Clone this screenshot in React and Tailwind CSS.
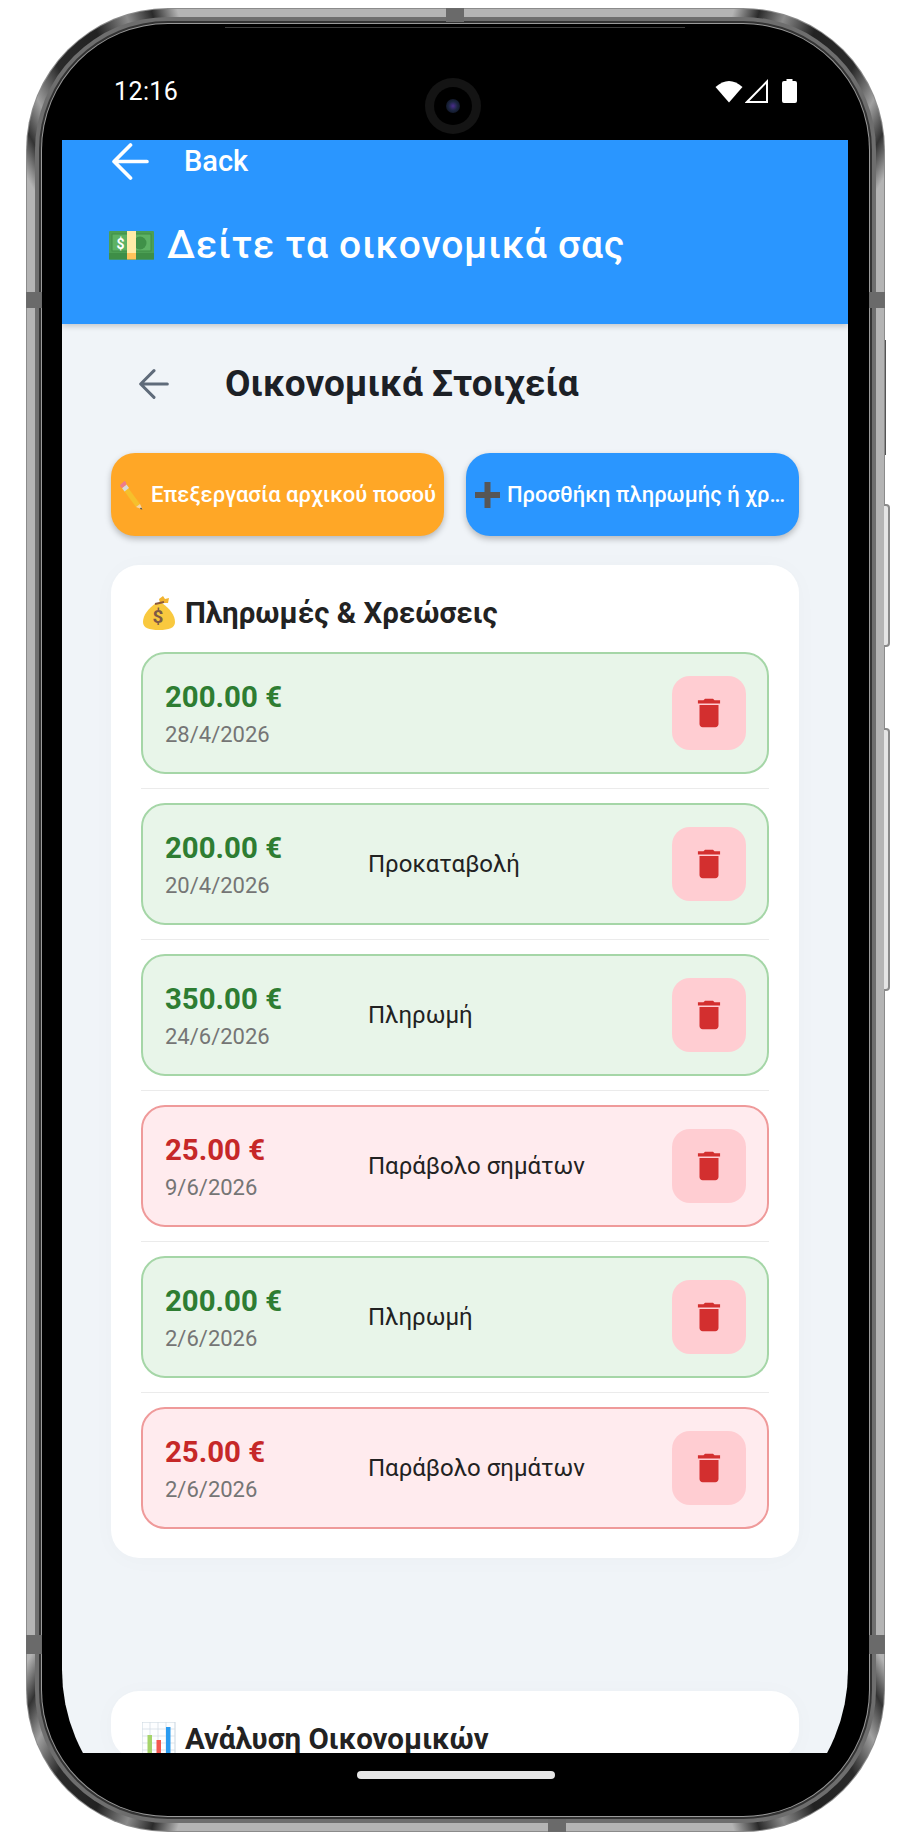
const items = [
  { kind: "g", amount: "200.00 €", date: "28/4/2026", desc: "" },
  { kind: "g", amount: "200.00 €", date: "20/4/2026", desc: "Προκαταβολή" },
  { kind: "g", amount: "350.00 €", date: "24/6/2026", desc: "Πληρωμή" },
  { kind: "r", amount: "25.00 €", date: "9/6/2026", desc: "Παράβολο σημάτων" },
  { kind: "g", amount: "200.00 €", date: "2/6/2026", desc: "Πληρωμή" },
  { kind: "r", amount: "25.00 €", date: "2/6/2026", desc: "Παράβολο σημάτων" },
];

function Arrow({ className, w = 36, h = 36 }) {
  return (
    <svg width={w} height={h} viewBox="0 0 36 36" fill="none" stroke="currentColor" strokeWidth="3.6" strokeLinecap="round" strokeLinejoin="round" className={className}>
      <path d="M18 2 L2 18 L18 34 M3 18 H34" />
    </svg>
  );
}

function Trash() {
  return (
    <svg width="38" height="38" viewBox="0 0 24 24" fill="#D32F2F">
      <path d="M6 19c0 1.1.9 2 2 2h8c1.1 0 2-.9 2-2V7H6v12zM19 4h-3.5l-1-1h-5l-1 1H5v2h14V4z" />
    </svg>
  );
}

function Banknote() {
  return (
    <svg width="45" height="29" viewBox="0 0 45 29" className="shrink-0">
      <rect x="0" y="0" width="45" height="28.5" rx="1" fill="#4C9F54" />
      <rect x="0" y="22" width="45" height="6.5" fill="#3E8E47" />
      <rect x="3" y="3" width="39" height="17" fill="#5DB264" stroke="#3E8E47" strokeWidth="1" />
      <circle cx="31" cy="12" r="6.5" fill="#3F9148" />
      <rect x="18" y="0" width="9" height="22" fill="#FFEBA8" />
      <rect x="18" y="22" width="9" height="6.5" fill="#FFC35A" />
      <text x="11.5" y="18" fontSize="14" fontWeight="700" fill="#fff" textAnchor="middle" fontFamily="Roboto, sans-serif">$</text>
    </svg>
  );
}

function Pencil() {
  return (
    <svg width="26" height="30" viewBox="0 0 26 30" className="shrink-0">
      <path d="M5 6 L19 25 L15 28 L1 9 Z" transform="translate(2 -1)" fill="#F6C02C" />
      <path d="M3 8 L7.5 4.5 L10 8 L5.5 11.5 Z" fill="#D9D9D9" />
      <path d="M1 5 L5.5 1 Q7 1 7.5 4.5 L3 8 Q1 7 1 5 Z" fill="#EF7C8A" />
      <path d="M17 27 L21 24 L23.5 29.5 Z" fill="#F4D6A8" />
      <path d="M22 27.5 L23.5 29.5 L21 29 Z" fill="#333" />
    </svg>
  );
}

function Plus() {
  return (
    <svg width="25" height="34" viewBox="0 0 25 34" className="shrink-0">
      <path d="M9.5 4 H15.5 V14 H25 V20 H15.5 V30 H9.5 V20 H0 V14 H9.5 Z" fill="#565656" />
    </svg>
  );
}

function Bag() {
  return (
    <svg width="34" height="34" viewBox="0 0 34 34" className="shrink-0">
      <path d="M14 7 L20 7 C28 13 33 19 33 26 C33 32 27 34 17 34 C7 34 1 32 1 26 C1 19 6 13 14 7 Z" fill="#F9C93F" />
      <path d="M18 7 L17 3 L21 0 L23 3 L27 2 L26 7 Z" fill="#F2B430" />
      <path d="M13 8 L22 6" stroke="#8C5A3C" strokeWidth="2" />
      <text x="16" y="27" fontSize="19" fontWeight="700" fill="#7D5A46" textAnchor="middle" fontFamily="Roboto, sans-serif">$</text>
    </svg>
  );
}

function Chart() {
  return (
    <svg width="34" height="34" viewBox="0 0 34 34" className="shrink-0">
      <rect x="0" y="0" width="33" height="34" fill="#FDFEFF" stroke="#C9D6E0" strokeWidth="1" />
      <path d="M0 7H33M0 14H33M0 21H33M0 28H33M8 0V34M16 0V34M24 0V34" stroke="#D4DEE6" strokeWidth="0.8" />
      <rect x="5.5" y="13" width="4.5" height="21" fill="#A5D46A" />
      <rect x="14.5" y="18" width="4.5" height="16" fill="#F4574E" />
      <rect x="24" y="5" width="4.5" height="29" fill="#2A9BF0" />
    </svg>
  );
}

function Row({ item }) {
  const good = item.kind === "g";
  return (
    <div className="mb-[14px] border-b border-[#ebebeb] pb-[14px] last:border-b-0">
      <div className={`flex h-[122px] items-center rounded-[24px] border-2 pl-[22px] pr-[21px] ${good ? "border-[#A5D6A7] bg-[#E8F5E9]" : "border-[#EF9A9A] bg-[#FFEBEE]"}`}>
        <div className="w-[203px] shrink-0 pt-[3px]">
          <div className={`text-[29.4px] font-bold leading-[34px] ${good ? "text-[#2E7D32]" : "text-[#C62828]"}`}>{item.amount}</div>
          <div className="mt-[6px] text-[22px] leading-[30px] text-[#757575]">{item.date}</div>
        </div>
        <div className="flex-1 text-[24px] text-[#222222]">{item.desc}</div>
        <div className="flex h-[74px] w-[74px] items-center justify-center rounded-[18px] bg-[#FFCDD2]">
          <Trash />
        </div>
      </div>
    </div>
  );
}

function Side({ className }) {
  return <div className={`absolute bg-[#6a6a6a] ${className}`} />;
}

export default function App() {
  return (
    <div className="relative h-[1842px] w-[906px] overflow-hidden bg-white pl-[26px] pt-[8px] font-['Roboto',sans-serif]">
      <div className="absolute left-[884px] top-[504px] h-[143px] w-[6px] rounded-r-[4px] border-2 border-l-0 border-[#8a8a8a] bg-[#e4e4e4]" />
      <div className="absolute left-[884px] top-[728px] h-[263px] w-[6px] rounded-r-[4px] border-2 border-l-0 border-[#8a8a8a] bg-[#e4e4e4]" />
      <div className="absolute left-[885px] top-[340px] h-[115px] w-px bg-[#555555]" />

      <div className="h-[1824px] w-[859px] rounded-[142px] bg-[#8b8b8b] p-px">
        <div className="h-full w-full rounded-[141px] bg-[conic-gradient(#b4b4b4_0deg,#b4b4b4_17deg,#2a2a2a_18.5deg,#8a8a8a_20deg,#222222_22deg,#2a2a2a_25deg,#a0a0a0_27deg,#333333_28.5deg,#b4b4b4_30deg,#b4b4b4_150deg,#333333_151.5deg,#a0a0a0_153deg,#2a2a2a_155deg,#222222_158deg,#8a8a8a_160deg,#2a2a2a_161.5deg,#b4b4b4_163deg,#b4b4b4_197deg,#2a2a2a_198.5deg,#8a8a8a_200deg,#222222_202deg,#2a2a2a_205deg,#a0a0a0_207deg,#333333_208.5deg,#b4b4b4_210deg,#b4b4b4_330deg,#333333_331.5deg,#a0a0a0_333deg,#2a2a2a_335deg,#222222_338deg,#8a8a8a_340deg,#2a2a2a_341.5deg,#b4b4b4_343deg,#b4b4b4_360deg)] p-[8px]">
          <div className="h-full w-full rounded-[133px] bg-[#6e6e6e] p-[4px]">
            <div className="h-full w-full rounded-[129px] bg-[#333333] p-[2px]">
              <div className="h-full w-full rounded-[127px] bg-[#9a9a9a] p-px">
                <div className="flex h-full w-full flex-col rounded-[126px] bg-black">
                  {/* status bar */}
                  <div className="relative flex h-[116px] shrink-0 items-start pl-[72px] pr-[72px] pt-[53px]">
                    <span className="text-[25px] leading-[30px] tracking-[0.4px] text-white">12:16</span>
                    <div className="absolute left-[383px] top-[54px] flex h-[56px] w-[56px] items-center justify-center rounded-full bg-[#141414]">
                      <div className="flex h-[38px] w-[38px] items-center justify-center rounded-full bg-black">
                        <div className="h-[14px] w-[14px] rounded-full bg-[radial-gradient(circle,#4a2c8c_0%,#1b2540_45%,#070a12_100%)]" />
                      </div>
                    </div>
                    <div className="ml-auto mt-[2px] flex items-start">
                      <svg width="28" height="24" viewBox="0 0 28 24" fill="#fff">
                        <path d="M14 23.5 L0.5 8 Q14 -4 27.5 8 Z" />
                      </svg>
                      <svg width="24" height="24" viewBox="0 0 24 24" fill="none" stroke="#fff" strokeWidth="2" className="ml-[2px]">
                        <path d="M22 2.5 V23 H2 Z" />
                      </svg>
                      <svg width="15" height="24" viewBox="0 0 15 24" fill="#fff" className="ml-[13px]">
                        <path d="M4.5 0 H10.5 V2 H13 Q15 2 15 4 V22 Q15 24 13 24 H2 Q0 24 0 22 V4 Q0 2 2 2 H4.5 Z" />
                      </svg>
                    </div>
                  </div>

                  {/* screen */}
                  <div className="ml-[20px] mr-[21px] h-[1613px] shrink-0 overflow-hidden">
                    <div className="h-[1705px] overflow-hidden rounded-b-[175px] bg-[#F0F4F8]">
                      <div className="h-[184px] bg-[#2A96FF] shadow-[0_2px_6px_rgba(0,0,0,0.2)]">
                        <div className="flex h-[42px] items-center pl-[50px] text-white">
                          <Arrow w={37} h={37} />
                          <span className="ml-[35px] text-[29px] font-medium leading-[40px]">Back</span>
                        </div>
                        <div className="mt-[40px] flex items-center pl-[47px] text-white">
                          <Banknote />
                          <span className="ml-[13px] text-[39px] font-medium leading-[46px] tracking-[0.75px]">Δείτε τα οικονομικά σας</span>
                        </div>
                      </div>

                      <div className="pl-[49px] pr-[49px]">
                        <div className="mt-[30px] flex h-[60px] items-center pl-[28px]">
                          <Arrow w={30} h={30} className="text-[#5F6B7A]" />
                          <span className="ml-[56px] text-[37px] font-bold leading-[40px] text-[#1C2026]">Οικονομικά Στοιχεία</span>
                        </div>

                        <div className="mt-[39px] flex gap-[22px]">
                          <div className="flex h-[83px] w-[333px] items-center justify-center rounded-[24px] bg-[#FFA726] shadow-[0_3px_6px_rgba(0,0,0,0.25)]">
                            <Pencil />
                            <span className="ml-[6px] whitespace-nowrap text-[22px] font-medium text-white">Επεξεργασία αρχικού ποσού</span>
                          </div>
                          <div className="flex h-[83px] w-[333px] items-center rounded-[24px] bg-[#2A96FF] pl-[9px] pr-[10px] shadow-[0_3px_6px_rgba(0,0,0,0.25)]">
                            <Plus />
                            <span className="ml-[7px] min-w-0 truncate text-[22px] font-medium text-white">Προσθήκη πληρωμής ή χρεώσης</span>
                          </div>
                        </div>

                        <div className="mt-[29px] rounded-[28px] bg-white px-[30px] pt-[28px] shadow-[0_2px_24px_rgba(0,0,0,0.025)]">
                          <div className="flex h-[40px] items-center pl-[1px]">
                            <Bag />
                            <span className="ml-[9px] text-[29.5px] font-bold leading-[40px] text-[#222222]">Πληρωμές &amp; Χρεώσεις</span>
                          </div>
                          <div className="mt-[19px]">
                            {items.map((it, i) => (
                              <Row key={i} item={it} />
                            ))}
                          </div>
                          <div className="h-[1px]" />
                        </div>

                        <div className="mt-[133px] rounded-[28px] bg-white px-[30px] pt-[28px] shadow-[0_2px_24px_rgba(0,0,0,0.025)]">
                          <div className="flex h-[40px] items-center pl-[1px]">
                            <Chart />
                            <span className="ml-[9px] text-[29.5px] font-bold leading-[40px] text-[#222222]">Ανάλυση Οικονομικών</span>
                          </div>
                        </div>
                      </div>
                    </div>
                  </div>

                  {/* home indicator */}
                  <div className="flex justify-center pt-[18px]">
                    <div className="h-[8px] w-[198px] rounded-full bg-[#E6E6E6]" />
                  </div>
                </div>
              </div>
            </div>
          </div>
        </div>
      </div>

      <div className="absolute left-[225px] top-[27px] h-px w-[460px] bg-[#3d3d3d]" />
      <Side className="left-[26px] top-[292px] h-[16px] w-[16px]" />
      <Side className="left-[869px] top-[292px] h-[16px] w-[16px]" />
      <Side className="left-[26px] top-[1635px] h-[19px] w-[16px]" />
      <Side className="left-[869px] top-[1635px] h-[19px] w-[16px]" />
      <Side className="left-[446px] top-[8px] h-[14px] w-[18px]" />
      <Side className="left-[548px] top-[1819px] h-[13px] w-[18px]" />
    </div>
  );
}
